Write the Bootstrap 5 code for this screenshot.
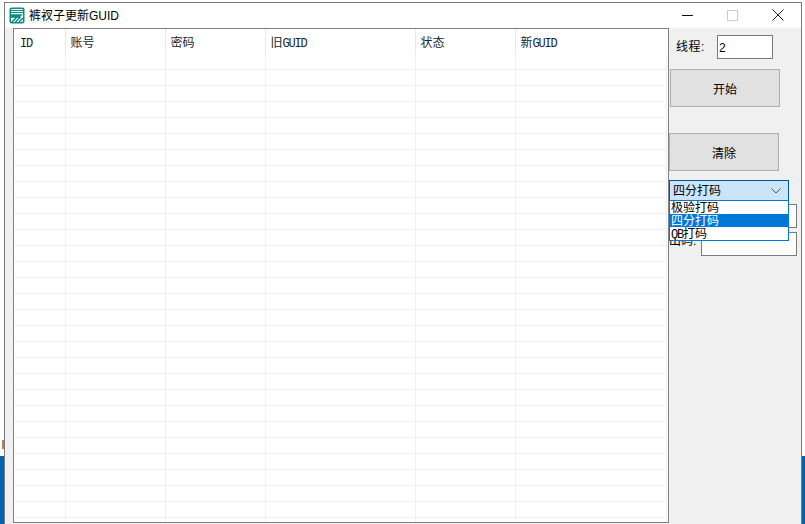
<!DOCTYPE html>
<html lang="zh">
<head>
<meta charset="utf-8">
<title>裤衩子更新GUID</title>
<link href="https://cdn.jsdelivr.net/npm/bootstrap@5.3.0/dist/css/bootstrap.min.css" rel="stylesheet">
<style>
html,body{height:524px;overflow:hidden}
body{background:linear-gradient(#fff 456px,#0063b1 456px);font:12px/1.2 "Liberation Sans","Noto Sans CJK SC",sans-serif;color:#000;position:relative}
.speck{position:absolute;left:2px;top:440px;width:2px;height:9px;background:#b9805a}
.appwin{margin:2px 3px 0 4px;height:522px;border:1px solid #7a7a7a;border-bottom:0;background:#f0f0f0;overflow:hidden}
.titlebar{height:25px;background:#fff;padding-left:4px}
.titletxt{margin-left:4px;padding-top:1px}
.winctrls{margin-top:-2px;margin-right:1px}
.winbtn{width:45px;height:25px}
.mainarea{height:496px}
.gridbox{width:656px;height:495px;margin-left:8px;border:1px solid #80808a;background:#fff;overflow:hidden;flex:none;padding-left:1px}
.gridtbl{table-layout:fixed;width:651px;font-family:"Liberation Sans","Noto Sans CJK SC",sans-serif;font-size:12px}
.gridtbl th,.gridtbl td{padding:0;border:0;background:#fff}
.gridtbl th{height:25px;font-weight:400;padding-left:5px;vertical-align:middle;border-right:1px solid #e8e8e8;line-height:1;padding-top:3px}
.gridtbl th:last-child{border-right:0}
.gridtbl td{height:16px;border-bottom:1px solid #f0f0f0;border-right:1px solid #f0f0f0;line-height:1}
.gridtbl tbody tr:first-child td{height:15px}
.mono{font-family:"Liberation Mono",monospace;font-size:12px;letter-spacing:-1.2px}
.sidepanel{width:132px;flex:none;position:relative}
.threadrow{margin:7px 0 9px 7px;height:24px}
.threadlabel{width:41px;letter-spacing:.5px}
.threadinput{width:56px;height:24px;border:1px solid #7a7a7a;background:#fff;padding:1px 0 0 1px;font-size:12px;border-radius:0;line-height:22px}
.flatbtn{display:block;width:110px;height:38px;background:#e1e1e1;border:1px solid #adadad;border-radius:0;font-size:12px;color:#000;padding:3px 0 0}
.btnstart{margin-left:1px;margin-top:10px}
.btnclear{margin-top:26px}
.combo{width:120px;height:21px;margin-top:9px;border:1px solid #005499;background:#cce4f7;padding:1px 7px 0 3px;font-size:12px}
.droplist{position:absolute;left:0;top:172px;width:120px;height:41px;background:#fff;border:1px solid #0078d7;z-index:2}
.dropitem{height:13px;line-height:13px;padding:0 0 0 1px;font-size:12px;position:relative;overflow:hidden}
.droptxt{display:block;padding-top:1px}
.dropitem.sel{background:#0078d7;color:#fff}
.lowinput{width:96px;height:24px;border:1px solid #7a7a7a;background:#fff;margin-left:32px}
.inputa{margin-top:3px}
.outrow{margin-top:4px}
.outlabel{width:32px;margin-right:-32px;padding-top:2px;white-space:nowrap}
</style>
</head>
<body>
<div class="speck"></div>
<div class="appwin">
  <div class="titlebar d-flex align-items-center">
    <svg width="16" height="17" viewBox="0 0 16 17" aria-hidden="true">
      <rect x=".5" y=".5" width="15" height="16" rx="2" fill="#0b8b86"/>
      <rect x="2" y="2" width="12" height="13" rx="1" fill="#fff"/>
      <path d="M2 3.500h12M2 5.500h12" stroke="#0b8b86" stroke-width="1"/>
      <path d="M2 8h10l-2 2H2zM3 15l5-5M6.500 15l5-5M10 15l4-4" fill="#0b8b86" stroke="#0b8b86" stroke-width="1.500"/>
    </svg>
    <span class="titletxt">裤衩子更新GUID</span>
    <div class="ms-auto d-flex winctrls">
      <div class="winbtn d-flex align-items-center justify-content-center">
        <svg width="12" height="12" viewBox="0 0 12 12"><path d="M0 6.500h11" stroke="#111"/></svg>
      </div>
      <div class="winbtn d-flex align-items-center justify-content-center">
        <svg width="12" height="12" viewBox="0 0 12 12"><rect x=".5" y="1.500" width="10" height="10" fill="none" stroke="#ccc"/></svg>
      </div>
      <div class="winbtn d-flex align-items-center justify-content-center">
        <svg width="12" height="12" viewBox="0 0 12 12"><path d="M.5.500l11 11M11.500.500l-11 11" stroke="#222"/></svg>
      </div>
    </div>
  </div>
  <div class="mainarea d-flex">
    <div class="gridbox">
      <table class="table table-borderless mb-0 gridtbl">
        <colgroup><col style="width:50px"><col style="width:100px"><col style="width:100px"><col style="width:150px"><col style="width:100px"><col style="width:151px"></colgroup>
        <thead><tr><th><span class="mono">ID</span></th><th>账号</th><th>密码</th><th>旧<span class="mono">GUID</span></th><th>状态</th><th>新<span class="mono">GUID</span></th></tr></thead>
        <tbody id="gridrows"></tbody>
      </table>
    </div>
    <div class="sidepanel">
      <div class="threadrow d-flex align-items-center">
        <span class="threadlabel">线程:</span>
        <div class="threadinput">2</div>
      </div>
      <button type="button" class="btn flatbtn btnstart">开始</button>
      <button type="button" class="btn flatbtn btnclear">清除</button>
      <div class="combo d-flex align-items-center justify-content-between">
        <span>四分打码</span>
        <svg width="10" height="6" viewBox="0 0 10 6"><path d="M.5.500L5 5 9.500.500" fill="none" stroke="#555"/></svg>
      </div>
      <div class="lowinput inputa"></div>
      <div class="d-flex outrow">
        <span class="outlabel">出码:</span>
        <div class="lowinput"></div>
      </div>
      <div class="droplist">
        <div class="dropitem"><span class="droptxt">极验打码</span></div>
        <div class="dropitem sel"><span class="droptxt">四分打码</span></div>
        <div class="dropitem"><span class="droptxt"><span class="mono">QB</span>打码</span></div>
      </div>
    </div>
  </div>
</div>
<script src="https://cdn.jsdelivr.net/npm/bootstrap@5.3.0/dist/js/bootstrap.bundle.min.js"></script>
<script>
var rows = '';
for (var i = 0; i < 30; i++) { rows += '<tr><td></td><td></td><td></td><td></td><td></td><td></td></tr>'; }
document.getElementById('gridrows').innerHTML = rows;
</script>
</body>
</html>
